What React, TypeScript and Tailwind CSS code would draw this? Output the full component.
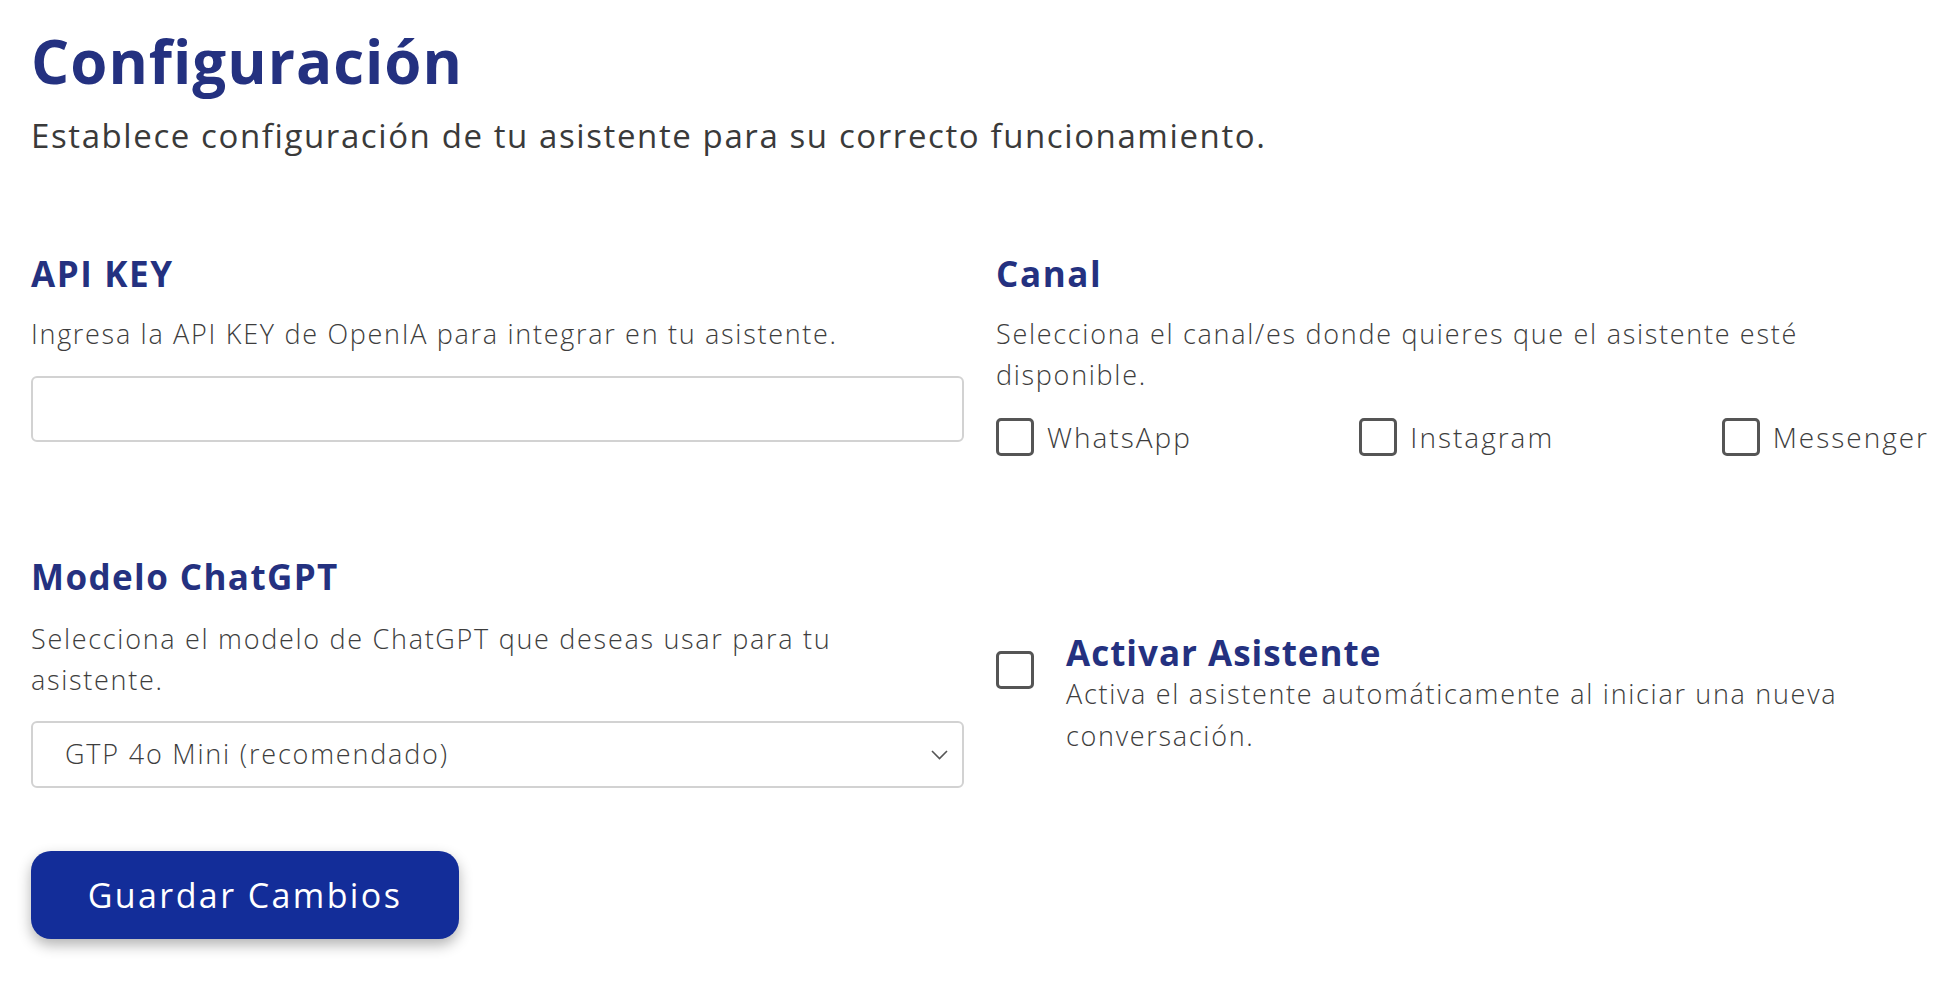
import React from 'react';

const channels = ['WhatsApp', 'Instagram', 'Messenger'];

const Checkbox = () => (
  <span className="block w-[38px] h-[38px] shrink-0 rounded-[5px] border-[3px] border-[#555555] bg-white" />
);

const App = () => {
  return (
    <div
      className="min-h-screen bg-white pl-[31px] pr-[23px] pt-[31px] text-[#3d3d3d]"
      style={{ fontFamily: '"Open Sans", "Liberation Sans", sans-serif' }}
    >
      {/* Header */}
      <h1 className="text-[60px] leading-none font-bold text-[#243180] tracking-[1px]">Configuración</h1>
      <p className="mt-[28px] text-[33px] leading-none text-[#3a3a3a] tracking-[1.6px]">
        Establece configuración de tu asistente para su correcto funcionamiento.
      </p>

      {/* Form */}
      <div className="mt-[104px] grid grid-cols-2 gap-x-8 gap-y-[101px]">
        <section>
          <h2 className="text-[35px] leading-none font-bold text-[#243180] tracking-[1.6px]">API KEY</h2>
          <p className="mt-[22px] text-[27px] leading-[41px] font-light tracking-[1.7px]">
            Ingresa la API KEY de OpenIA para integrar en tu asistente.
          </p>
          <input
            type="text"
            className="mt-[22px] block w-full h-[66px] rounded-[6px] border-2 border-[#d2d2d2] bg-white px-4 text-[27px] outline-none"
          />
        </section>

        <section>
          <h2 className="text-[35px] leading-none font-bold text-[#243180] tracking-[1.6px]">Canal</h2>
          <p className="mt-[22px] text-[27px] leading-[41px] font-light tracking-[1.7px]">
            Selecciona el canal/es donde quieres que el asistente esté
            <br />
            disponible.
          </p>
          <div className="mt-[21px] flex items-center justify-between">
            {channels.map((c) => (
              <label key={c} className="flex items-center gap-[13px] text-[28px] font-light text-[#3d3d3d] tracking-[2px]">
                <Checkbox />
                {c}
              </label>
            ))}
          </div>
        </section>

        <section>
          <h2 className="text-[35px] leading-none font-bold text-[#243180] tracking-[1.4px]">Modelo ChatGPT</h2>
          <p className="mt-[24px] text-[27px] leading-[41px] font-light tracking-[1.7px]">
            Selecciona el modelo de ChatGPT que deseas usar para tu
            <br />
            asistente.
          </p>
          <div className="relative mt-[21px] h-[67px] w-full rounded-[6px] border-2 border-[#d2d2d2] bg-white flex items-center pl-[32px] pr-4">
            <span className="text-[27px] font-light text-[#3d3d3d] tracking-[1.8px]">GTP 4o Mini (recomendado)</span>
            <svg
              className="absolute right-[14px] top-1/2 -translate-y-1/2"
              width="17"
              height="10"
              viewBox="0 0 17 10"
              fill="none"
              stroke="#555"
              strokeWidth="1.6"
            >
              <path d="M1 1l7.5 7.5L16 1" />
            </svg>
          </div>
        </section>

        <section className="pt-[76px] flex items-start gap-[32px]">
          <span className="mt-[16px]">
            <Checkbox />
          </span>
          <div>
            <h2 className="text-[35px] leading-none font-bold text-[#243180] tracking-[1px]">Activar Asistente</h2>
            <p className="mt-[3px] text-[27px] leading-[42px] font-light tracking-[1.7px]">
              Activa el asistente automáticamente al iniciar una nueva
              <br />
              conversación.
            </p>
          </div>
        </section>
      </div>

      <button className="mt-[63px] h-[88px] w-[428px] rounded-[20px] bg-[#132d99] text-[34px] text-white tracking-[2.4px] shadow-[0_6px_14px_rgba(0,0,0,0.3)]">
        Guardar Cambios
      </button>
    </div>
  );
};

export default App;
